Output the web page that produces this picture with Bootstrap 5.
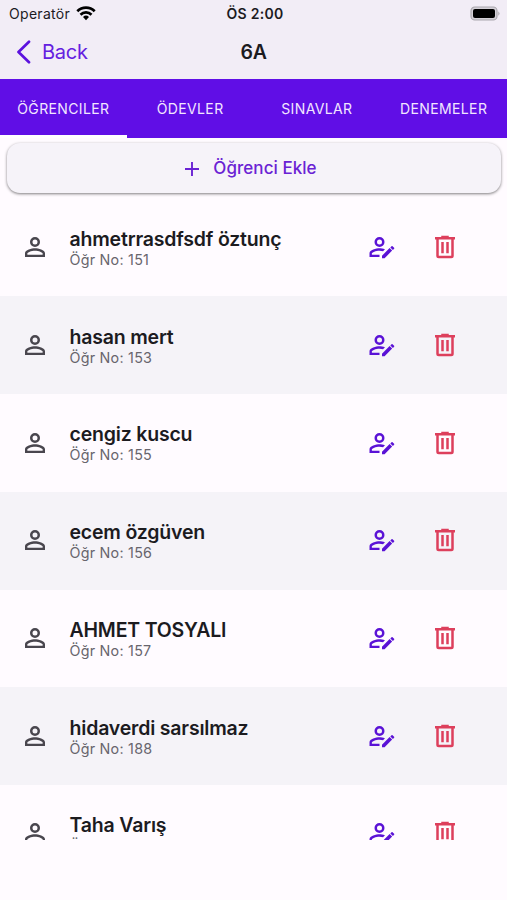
<!DOCTYPE html>
<html lang="tr">
<head>
<meta charset="utf-8">
<meta name="viewport" content="width=device-width, initial-scale=1">
<title>6A</title>
<link href="https://cdn.jsdelivr.net/npm/bootstrap@5.3.0/dist/css/bootstrap.min.css" rel="stylesheet">
<style>
body{font-family:Inter,"Liberation Sans",sans-serif;background:#fffbff;color:#1c1b1f;height:900px;overflow:hidden}
svg{display:block;flex:none}
.top-area{background:#f2edf6;height:79px}
.status{height:27px;font-size:13.5px;padding:0 7px 0 9px}
.status>div,.title-bar>div{flex:1 1 0}
.carrier{font-size:14px;letter-spacing:.3px;margin-right:1.5px}
.clock{font-weight:600;font-size:14px;letter-spacing:.3px;margin-left:1px}
.title-bar{height:50px;padding:2px 16px 0}
.back-link{color:#6420e0;font-size:20px}
.back-text{letter-spacing:-.25px}
.heading{font-size:19.5px;font-weight:600;letter-spacing:-.2px}
.tab-strip{background:#600ee6;height:58.5px}
.tab-strip .nav-link{color:#f2e6ff;font-size:14px;letter-spacing:.38px;height:58.5px;padding:4px 0 0;border-radius:0;border-bottom:3.5px solid transparent;white-space:nowrap}
.tab-strip .nav-link.active{border-bottom-color:#fff}
.add-btn,.add-btn:hover{height:50px;padding:8px 18px 6px 12px;margin:5px 6px 0 7px;background:#f6f3f9;border:0;border-radius:13px;color:#6a22d4;font-size:17px;font-weight:500;letter-spacing:.05px;box-shadow:0 1px 3px rgba(0,0,0,.5)}
.add-icon{margin-right:14px}
.students{height:641px;margin-top:6px;overflow:hidden}
.student{height:97.75px;padding:1px 47px 0 20px}
.student>svg{margin-bottom:1.6px}
.student:last-child>svg{margin-bottom:3.6px}
.student:nth-child(even){background:#f5f3f8}
.person{color:#49464e;margin-right:19.5px}
.full-name{font-size:19.5px;line-height:24px;font-weight:600;letter-spacing:-.19px}
.number{font-size:14.3px;line-height:18px;color:#68656d;letter-spacing:.25px}
.edit{color:#5a12d6;margin-right:33px}
.trash{color:#dd3f5c}
</style>
<script src="https://cdn.jsdelivr.net/npm/bootstrap@5.3.0/dist/js/bootstrap.bundle.min.js"></script>
</head>
<body>
<svg width="0" height="0" class="position-absolute">
<symbol id="person" viewBox="0 0 24 24"><path fill="currentColor" d="M12,4A4,4 0 0,1 16,8A4,4 0 0,1 12,12A4,4 0 0,1 8,8A4,4 0 0,1 12,4M12,6A2,2 0 0,0 10,8A2,2 0 0,0 12,10A2,2 0 0,0 14,8A2,2 0 0,0 12,6M12,13C14.67,13 20,14.33 20,17V20H4V17C4,14.33 9.33,13 12,13M12,14.9C9.03,14.9 5.9,16.36 5.9,17V18.1H18.1V17C18.1,16.36 14.97,14.9 12,14.9Z"/></symbol>
<symbol id="edit" viewBox="0 0 24 24"><path fill="currentColor" d="M10,4A4,4 0 0,1 14,8A4,4 0 0,1 10,12A4,4 0 0,1 6,8A4,4 0 0,1 10,4M10,6A2,2 0 0,0 8,8A2,2 0 0,0 10,10A2,2 0 0,0 12,8A2,2 0 0,0 10,6M2,17V20H10V18.1H3.9V17C3.9,16.36 7.03,14.9 10,14.9C10.96,14.9 11.94,15.05 12.83,15.3L14.38,13.75C12.8,13.3 11.2,13 10,13C7.33,13 2,14.33 2,17M21.7,13.35L20.7,14.35L18.65,12.35L19.65,11.35C19.86,11.14 20.21,11.14 20.42,11.35L21.7,12.58C21.91,12.79 21.91,13.14 21.7,13.35M12,18.94V21H14.06L20.12,14.88L18.07,12.88L12,18.94Z"/></symbol>
<symbol id="trash" viewBox="0 0 24 24"><path fill="currentColor" d="M9,3V4H4V6H5V19A2,2 0 0,0 7,21H17A2,2 0 0,0 19,19V6H20V4H15V3H9M7,6H17V19H7V6M9,8V17H11V8H9M13,8V17H15V8H13Z"/></symbol>
</svg>
<header class="top-area">
<div class="status d-flex align-items-center">
<div class="d-flex align-items-center gap-1"><span class="carrier">Operatör</span>
<svg width="20" height="15" viewBox="0 0 20 15"><path fill="none" stroke="#000" stroke-width="2.7" d="M1.3 5.2a12.4 12.4 0 0 1 17.4 0M4.5 8.7a7.8 7.8 0 0 1 11 0"/><path d="M10 14.2l-3-3.2a4.3 4.3 0 0 1 6 0z"/></svg></div>
<span class="clock">ÖS 2:00</span>
<div class="d-flex justify-content-end"><svg width="31" height="15" viewBox="0 0 31 15"><rect x="2" y="1" width="26" height="13" rx="3.8" fill="#d5d1d8" stroke="#aaa7ad" stroke-width="1.2"/><rect x="4" y="3" width="22" height="9" rx="2" fill="#000"/><path d="M29.3 5.2q2.4 2.3 0 4.6z" fill="#aaa7ad"/></svg></div>
</div>
<div class="title-bar d-flex align-items-center">
<div><a href="#" class="back-link d-inline-flex align-items-center text-decoration-none"><svg width="26" height="24" viewBox="0 0 26 24"><path fill="none" stroke="#5c12de" stroke-width="2.7" stroke-linecap="round" stroke-linejoin="round" d="M13 1.8 2.5 12 13 22.2"/></svg><span class="back-text">Back</span></a></div>
<span class="heading">6A</span><div></div>
</div>
</header>
<nav class="tab-strip nav nav-fill row g-0">
<a class="nav-link active col-3 d-flex align-items-center justify-content-center" href="#"><span>ÖĞRENCILER</span></a>
<a class="nav-link col-3 d-flex align-items-center justify-content-center" href="#"><span>ÖDEVLER</span></a>
<a class="nav-link col-3 d-flex align-items-center justify-content-center" href="#"><span>SINAVLAR</span></a>
<a class="nav-link col-3 d-flex align-items-center justify-content-center" href="#"><span>DENEMELER</span></a>
</nav>
<main class="d-flex flex-column">
<button type="button" class="add-btn btn d-flex align-items-center justify-content-center"><svg class="add-icon" width="14" height="14" viewBox="0 0 14 14"><path d="M7 0v14M0 7h14" stroke="currentColor" stroke-width="1.9"/></svg><span>Öğrenci Ekle</span></button>
<div class="students">
<div class="student d-flex align-items-center"><svg class="person" width="30" height="30"><use href="#person"/></svg><div class="flex-grow-1"><div class="full-name"><span>ahmetrrasdfsdf öztunç</span></div><div class="number"><span>Öğr No: 151</span></div></div><svg class="edit" width="30" height="30"><use href="#edit"/></svg><svg class="trash" width="30" height="30"><use href="#trash"/></svg></div>
<div class="student d-flex align-items-center"><svg class="person" width="30" height="30"><use href="#person"/></svg><div class="flex-grow-1"><div class="full-name"><span>hasan mert</span></div><div class="number"><span>Öğr No: 153</span></div></div><svg class="edit" width="30" height="30"><use href="#edit"/></svg><svg class="trash" width="30" height="30"><use href="#trash"/></svg></div>
<div class="student d-flex align-items-center"><svg class="person" width="30" height="30"><use href="#person"/></svg><div class="flex-grow-1"><div class="full-name"><span>cengiz kuscu</span></div><div class="number"><span>Öğr No: 155</span></div></div><svg class="edit" width="30" height="30"><use href="#edit"/></svg><svg class="trash" width="30" height="30"><use href="#trash"/></svg></div>
<div class="student d-flex align-items-center"><svg class="person" width="30" height="30"><use href="#person"/></svg><div class="flex-grow-1"><div class="full-name"><span>ecem özgüven</span></div><div class="number"><span>Öğr No: 156</span></div></div><svg class="edit" width="30" height="30"><use href="#edit"/></svg><svg class="trash" width="30" height="30"><use href="#trash"/></svg></div>
<div class="student d-flex align-items-center"><svg class="person" width="30" height="30"><use href="#person"/></svg><div class="flex-grow-1"><div class="full-name"><span>AHMET TOSYALI</span></div><div class="number"><span>Öğr No: 157</span></div></div><svg class="edit" width="30" height="30"><use href="#edit"/></svg><svg class="trash" width="30" height="30"><use href="#trash"/></svg></div>
<div class="student d-flex align-items-center"><svg class="person" width="30" height="30"><use href="#person"/></svg><div class="flex-grow-1"><div class="full-name"><span>hidaverdi sarsılmaz</span></div><div class="number"><span>Öğr No: 188</span></div></div><svg class="edit" width="30" height="30"><use href="#edit"/></svg><svg class="trash" width="30" height="30"><use href="#trash"/></svg></div>
<div class="student d-flex align-items-center"><svg class="person" width="30" height="30"><use href="#person"/></svg><div class="flex-grow-1"><div class="full-name"><span>Taha Varış</span></div><div class="number"><span>Ö</span></div></div><svg class="edit" width="30" height="30"><use href="#edit"/></svg><svg class="trash" width="30" height="30"><use href="#trash"/></svg></div>
</div>
</main>
</body>
</html>
